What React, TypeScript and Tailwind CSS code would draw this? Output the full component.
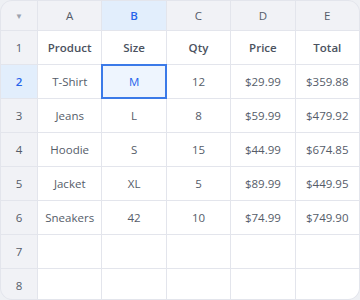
const columns = ["A", "B", "C", "D", "E"];

const rows: string[][] = [
  ["Product", "Size", "Qty", "Price", "Total"],
  ["T-Shirt", "M", "12", "$29.99", "$359.88"],
  ["Jeans", "L", "8", "$59.99", "$479.92"],
  ["Hoodie", "S", "15", "$44.99", "$674.85"],
  ["Jacket", "XL", "5", "$89.99", "$449.95"],
  ["Sneakers", "42", "10", "$74.99", "$749.90"],
  ["", "", "", "", ""],
  ["", "", "", "", ""],
];

// selected cell: B2
const selRow = 1;
const selCol = 1;

export default function App() {
  return (
    <div className="h-[300px] w-[360px] bg-[#eef0f4] font-['Open_Sans','Noto_Sans',sans-serif]">
      <div className="h-[300px] w-[360px] overflow-hidden rounded-xl border border-[#e3e5ec] bg-[#e3e5ec]">
        <div className="grid grid-cols-[36px_repeat(5,1fr)] grid-rows-[29px_repeat(8,33px)] gap-px">
          <div className="flex items-center justify-center bg-[#f1f2f6] text-[8px] text-[#9ca3af]">▼</div>
          {columns.map((c, i) => (
            <div
              key={c}
              className={
                i === selCol
                  ? "flex items-center justify-center bg-[#e2eefc] text-[11.5px] font-semibold text-[#2563eb]"
                  : "flex items-center justify-center bg-[#f1f2f6] text-[11.5px] text-[#555c69]"
              }
            >
              {c}
            </div>
          ))}

          {rows.map((row, r) => (
            <>
              <div
                key={`h${r}`}
                className={
                  r === selRow
                    ? "flex items-center justify-center bg-[#e2eefc] text-[11.5px] font-semibold text-[#2563eb]"
                    : "flex items-center justify-center bg-[#f1f2f6] text-[11.5px] font-medium text-[#555c69]"
                }
              >
                {r + 1}
              </div>
              {row.map((cell, c) =>
                r === selRow && c === selCol ? (
                  <div
                    key={`${r}-${c}`}
                    className="-m-px flex items-center justify-center border-2 border-[#3b7ae8] bg-[#eef5fe] text-[11.5px] text-[#2563eb]"
                  >
                    {cell}
                  </div>
                ) : (
                  <div
                    key={`${r}-${c}`}
                    className={
                      r === 0
                        ? "flex items-center justify-center bg-white text-[11.5px] font-semibold text-[#4b5260]"
                        : "flex items-center justify-center bg-white text-[11.5px] text-[#555c69]"
                    }
                  >
                    {cell}
                  </div>
                )
              )}
            </>
          ))}
        </div>
      </div>
    </div>
  );
}
